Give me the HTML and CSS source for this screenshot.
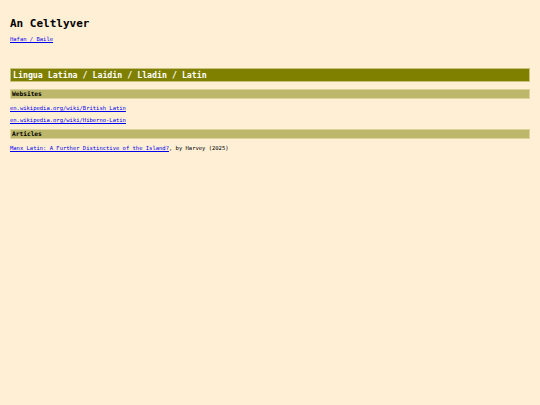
FILE: index.html
```html
<!DOCTYPE html>
<html>
<head>
  <title>An Celtlyver - Latin</title>
  <link rel="stylesheet" href="styles.css">
</head>
<body>
  <h1 class="site-title">An Celtlyver</h1>
  <p class="crumbs"><a href="#">Hafan / Baile</a></p>
  <h2 class="lang-title">Lingua Latina / Laidin / Lladin / Latin</h2>
  <h3 class="section-title">Websites</h3>
  <ul class="link-list">
    <li><a href="#">en.wikipedia.org/wiki/British_Latin</a></li>
    <li><a href="#">en.wikipedia.org/wiki/Hiberno-Latin</a></li>
  </ul>
  <h3 class="section-title">Articles</h3>
  <ul class="link-list">
    <li><a href="#">Manx Latin: A Further Distinctive of the Island?</a>, by Harvey (2025)</li>
  </ul>
</body>
</html>
```

FILE: styles.css
```css
body {
  font-family: "DejaVu Sans Mono", monospace;
  background-color: #ffefd5;
  color: #000;
  margin: 0;
  padding: 0 10px;
}
a {
  color: #0000ee;
}
.site-title {
  font-size: 11px;
  line-height: 13px;
  margin: 17px 0 6px;
}
.crumbs {
  font-size: 5.5px;
  line-height: 7px;
  margin: 0 0 25px;
}
.lang-title {
  font-size: 8.25px;
  line-height: 12px;
  color: #fff;
  background-color: #808000;
  border: 1px solid #c9c27a;
  padding: 0 2px;
  margin: 0 0 7px;
}
.section-title {
  font-size: 6.2px;
  line-height: 8px;
  background-color: #bdb76b;
  border: 1px solid #dcd49a;
  padding: 0 1px;
  margin: 0 0 6px;
}
.link-list {
  list-style: none;
  font-size: 5.5px;
  line-height: 7px;
  padding: 0;
  margin: 0 0 5px;
}
.link-list li {
  margin-bottom: 5px;
}
```
